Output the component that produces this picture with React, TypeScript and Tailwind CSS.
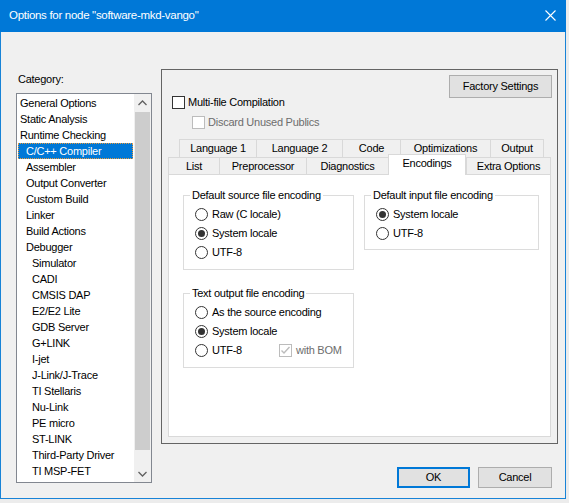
import React from "react";

const FONT = "font-['Liberation_Sans',Arial,sans-serif]";

type Item = { label: string; level: 0 | 1 | 2 };

const CATEGORIES: Item[] = [
  { label: "General Options", level: 0 },
  { label: "Static Analysis", level: 0 },
  { label: "Runtime Checking", level: 0 },
  { label: "C/C++ Compiler", level: 1 },
  { label: "Assembler", level: 1 },
  { label: "Output Converter", level: 1 },
  { label: "Custom Build", level: 1 },
  { label: "Linker", level: 1 },
  { label: "Build Actions", level: 1 },
  { label: "Debugger", level: 1 },
  { label: "Simulator", level: 2 },
  { label: "CADI", level: 2 },
  { label: "CMSIS DAP", level: 2 },
  { label: "E2/E2 Lite", level: 2 },
  { label: "GDB Server", level: 2 },
  { label: "G+LINK", level: 2 },
  { label: "I-jet", level: 2 },
  { label: "J-Link/J-Trace", level: 2 },
  { label: "TI Stellaris", level: 2 },
  { label: "Nu-Link", level: 2 },
  { label: "PE micro", level: 2 },
  { label: "ST-LINK", level: 2 },
  { label: "Third-Party Driver", level: 2 },
  { label: "TI MSP-FET", level: 2 },
];

const INDENT: Record<Item["level"], string> = {
  0: "pl-[2px]",
  1: "pl-[8px]",
  2: "pl-[14px]",
};

const ROW1 = [
  { label: "Language 1", w: "w-[77px]" },
  { label: "Language 2", w: "w-[86px]" },
  { label: "Code", w: "w-[58px]" },
  { label: "Optimizations", w: "w-[90px]" },
  { label: "Output", w: "w-[54px] border-r" },
];

const ROW2 = [
  { label: "List", w: "w-[51px]" },
  { label: "Preprocessor", w: "w-[87px]" },
  { label: "Diagnostics", w: "w-[82px]" },
  { label: "Encodings", w: "w-[78px]", selected: true },
  { label: "Extra Options", w: "w-[85px] border-r" },
];

function Chevron({ up }: { up?: boolean }) {
  return (
    <svg width="9" height="6" viewBox="0 0 9 6" className="block">
      <polyline
        points={up ? "0.5,5 4.5,1 8.5,5" : "0.5,1 4.5,5 8.5,1"}
        fill="none"
        stroke="#606060"
        strokeWidth="1.3"
      />
    </svg>
  );
}

function CheckMark({ color }: { color: string }) {
  return (
    <svg width="11" height="11" viewBox="0 0 11 11">
      <polyline points="1.5,5.5 4,8 9.5,2" fill="none" stroke={color} strokeWidth="1.4" />
    </svg>
  );
}

function Checkbox({ label, disabled, checked }: { label: string; disabled?: boolean; checked?: boolean }) {
  return (
    <div className="flex items-center gap-[3px]">
      <span
        className={`flex h-[13px] w-[13px] items-center justify-center border bg-white ${
          disabled ? "border-[#bcbcbc]" : "border-[#333333]"
        }`}
      >
        {checked && <CheckMark color={disabled ? "#bcbcbc" : "#333"} />}
      </span>
      <span className={disabled ? "text-[#6d6d6d]" : "text-black"}>{label}</span>
    </div>
  );
}

function Radio({ label, checked, className = "" }: { label: string; checked?: boolean; className?: string }) {
  return (
    <div className={`flex items-center gap-[4px] ${className}`}>
      <span className="flex h-[13px] w-[13px] items-center justify-center rounded-full border border-[#333333] bg-white">
        {checked && <span className="h-[7px] w-[7px] rounded-full bg-[#333333]" />}
      </span>
      <span>{label}</span>
    </div>
  );
}

function Group({ title, children, className = "" }: { title: string; children: React.ReactNode; className?: string }) {
  return (
    <fieldset className={`border border-[#dcdcdc] pl-[11px] pt-[3px] ${className}`}>
      <legend className="-ml-[5px] px-[2px] leading-[13px]">{title}</legend>
      {children}
    </fieldset>
  );
}

function Button({ children, primary, className = "" }: { children: React.ReactNode; primary?: boolean; className?: string }) {
  return (
    <div
      className={`flex items-center justify-center bg-[#e1e1e1] ${
        primary ? "border-2 border-[#0078d7]" : "border border-[#adadad]"
      } ${className}`}
    >
      {children}
    </div>
  );
}

export default function App() {
  return (
    <div className={`h-[503px] w-[569px] overflow-hidden bg-[#ececec] text-[11px] tracking-[-0.25px] text-black ${FONT}`}>
      <div className="flex h-[499px] w-[566px] flex-col border-x border-b border-[#1883d7] bg-[#f0f0f0]">
        {/* title bar */}
        <div className="-mx-px flex h-[32px] shrink-0 items-center justify-between bg-[#0078d7] pl-[9px] pr-[10px]">
          <span className="text-[11.5px] tracking-[-0.3px] text-white">Options for node "software-mkd-vango"</span>
          <svg width="11" height="11" viewBox="0 0 11 11" className="mb-[1px]">
            <path d="M0.5 0.5 L10.5 10.5 M10.5 0.5 L0.5 10.5" stroke="white" strokeWidth="1.1" />
          </svg>
        </div>

        <div className="flex flex-1">
          {/* category list */}
          <div className="flex flex-col pl-[15px] pt-[41px]">
            <div className="pl-[2px] leading-[13px]">Category:</div>
            <div className="mt-[7px] flex h-[390px] w-[136px] border border-[#828790] bg-white">
              <div className="flex flex-1 flex-col pt-[1px]">
                {CATEGORIES.map((c, i) => {
                  const sel = i === 3;
                  return (
                    <div
                      key={c.label}
                      className={`ml-px flex h-[16px] w-[115px] items-center whitespace-nowrap ${
                        sel
                          ? "border border-dotted border-[#e89a3c] bg-[#0078d7] pl-[7px] text-white"
                          : INDENT[c.level]
                      }`}
                    >
                      {c.label}
                    </div>
                  );
                })}
              </div>
              <div className="flex w-[17px] flex-col bg-[#f0f0f0]">
                <div className="flex h-[17px] items-center justify-center">
                  <Chevron up />
                </div>
                <div className="mx-px mt-px h-[338px] bg-[#cdcdcd]" />
                <div className="flex-1" />
                <div className="flex h-[17px] items-center justify-center">
                  <Chevron />
                </div>
              </div>
            </div>
          </div>

          {/* options pane */}
          <div className="ml-[9px] flex flex-col pt-[37px]">
            <div className="flex h-[375px] w-[397px] flex-col border border-[#646464]">
              <div className="flex justify-between">
                <div className="flex flex-col gap-[7px] pl-[10px] pt-[26px] leading-[13px]">
                  <Checkbox label="Multi-file Compilation" />
                  <div className="pl-[20px]">
                    <Checkbox label="Discard Unused Publics" disabled />
                  </div>
                </div>
                <Button className="mr-[5px] mt-[5px] h-[23px] w-[103px]">Factory Settings</Button>
              </div>

              <div className="mx-[6px] mt-[10px] flex flex-1 flex-col pb-[6px]">
                <div className="flex h-[18px] pl-[11px]">
                  {ROW1.map((t) => (
                    <div
                      key={t.label}
                      className={`flex items-center justify-center border-l border-t border-[#d9d9d9] ${t.w}`}
                    >
                      {t.label}
                    </div>
                  ))}
                </div>
                <div className="flex h-[17px] items-end">
                  {ROW2.map((t) => (
                    <div
                      key={t.label}
                      className={`flex items-center justify-center border-l border-t border-[#d9d9d9] ${t.w} ${
                        t.selected ? "relative z-10 -mb-px h-[21px] border-r bg-white pb-[3px]" : "h-[17px]"
                      }`}
                    >
                      {t.label}
                    </div>
                  ))}
                </div>
                <div className="flex flex-1 border border-[#d9d9d9] bg-white pl-[14px] pt-[14px]">
                  <div className="flex w-[171px] flex-col gap-[17px]">
                    <Group title="Default source file encoding" className="pb-[7px]">
                      <Radio className="h-[19px]" label="Raw (C locale)" />
                      <Radio className="h-[19px]" label="System locale" checked />
                      <Radio className="h-[19px]" label="UTF-8" />
                    </Group>
                    <Group title="Text output file encoding" className="pb-[7px]">
                      <Radio className="h-[19px]" label="As the source encoding" />
                      <Radio className="h-[19px]" label="System locale" checked />
                      <div className="flex h-[19px] items-center">
                        <Radio className="w-[84px]" label="UTF-8" />
                        <div className="flex items-center gap-[4px]">
                          <span className="flex h-[13px] w-[13px] items-center justify-center border border-[#bcbcbc] bg-white">
                            <CheckMark color="#bcbcbc" />
                          </span>
                          <span className="text-[#6d6d6d]">with BOM</span>
                        </div>
                      </div>
                    </Group>
                  </div>
                  <div className="ml-[10px] flex w-[175px] flex-col self-start">
                    <Group title="Default input file encoding" className="pb-[6px]">
                      <Radio className="h-[19px]" label="System locale" checked />
                      <Radio className="h-[19px]" label="UTF-8" />
                    </Group>
                  </div>
                </div>
              </div>
            </div>

            <div className="mt-[23px] flex justify-end gap-[8px] pr-[6px]">
              <Button primary className="h-[21px] w-[73px]">OK</Button>
              <Button className="h-[21px] w-[74px]">Cancel</Button>
            </div>
          </div>
        </div>
      </div>
    </div>
  );
}
